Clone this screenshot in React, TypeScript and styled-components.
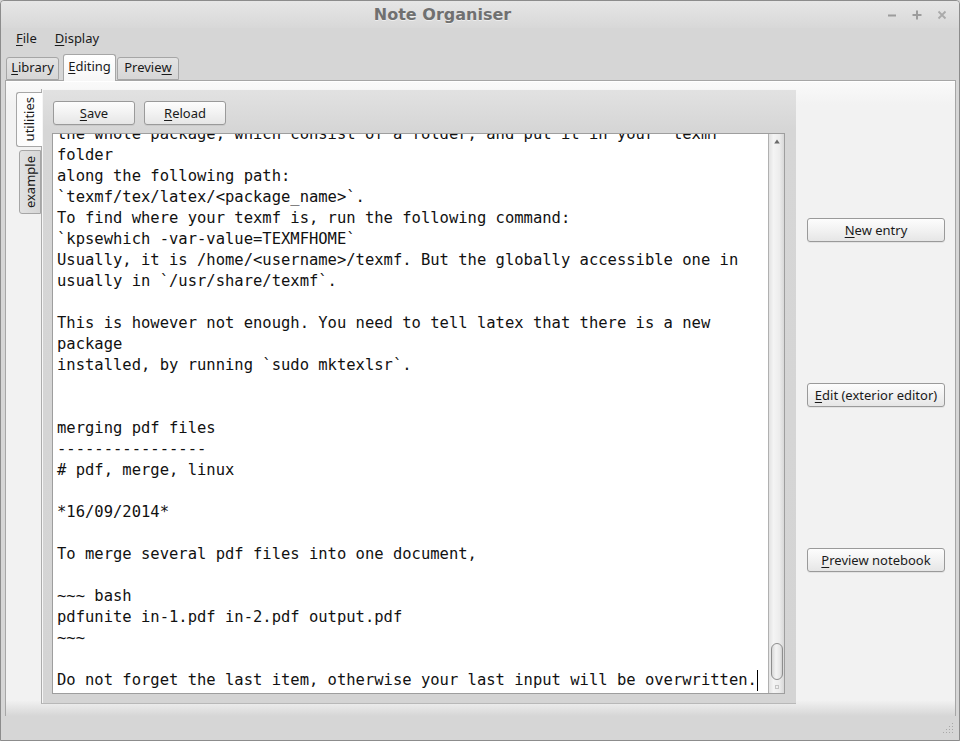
import React from "react";
import styled, { createGlobalStyle } from "styled-components";

const Global = createGlobalStyle`
  html, body { margin: 0; padding: 0; background: #d6d6d6; }
  body { font-family: "Noto Sans", "DejaVu Sans", sans-serif; font-size: 13px; color: #1e1e1e; }
  #root { width: 960px; height: 741px; }
`;

const Window = styled.div`
  box-sizing: border-box;
  width: 960px;
  height: 741px;
  border: 1px solid #8c8c8c;
  border-radius: 4px 4px 0 0;
  background: #d6d6d6;
  display: flex;
  flex-direction: column;
  overflow: hidden;
`;

const TitleBar = styled.div`
  height: 27px;
  flex: none;
  display: flex;
  align-items: center;
  background: linear-gradient(to bottom, #e6e6e6, #d8d8d8);
`;

const Title = styled.div`
  flex: 1;
  text-align: center;
  font-family: "DejaVu Sans", sans-serif;
  font-weight: bold;
  font-size: 16px;
  color: #707070;
  text-shadow: 0 1px 0 rgba(255, 255, 255, 0.5);
`;

const Controls = styled.div`
  width: 75px;
  box-sizing: border-box;
  padding: 0 12px 0 3px;
  display: flex;
  gap: 15px;
  align-items: center;
`;

const MenuBar = styled.div`
  height: 20px;
  flex: none;
  display: flex;
  align-items: center;
  padding-left: 6px;
`;

const MenuItem = styled.div`
  padding: 0 9px;
  line-height: 20px;
  color: #1a1a1a;
`;

const Mn = styled.span`
  text-decoration: underline;
  text-underline-offset: 2px;
  text-decoration-thickness: 1px;
`;

function Label({ text, at }: { text: string; at: number }) {
  return (
    <>
      {text.slice(0, at)}
      <Mn>{text[at]}</Mn>
      {text.slice(at + 1)}
    </>
  );
}

const TabBar = styled.div`
  height: 32px;
  flex: none;
  display: flex;
  align-items: flex-end;
  padding-left: 5px;
  position: relative;
  z-index: 1;
`;

const Tab = styled.div<{ $active?: boolean; $w: number; $ml: number }>`
  box-sizing: border-box;
  width: ${(p) => p.$w}px;
  margin-left: ${(p) => p.$ml}px;
  height: ${(p) => (p.$active ? 27 : 23)}px;
  margin-bottom: ${(p) => (p.$active ? -1 : 0)}px;
  display: flex;
  align-items: center;
  justify-content: center;
  padding-bottom: ${(p) => (p.$active ? 4 : 3)}px;
  border: 1px solid #a6a6a6;
  border-bottom: ${(p) => (p.$active ? "none" : "1px solid #a6a6a6")};
  border-radius: 3px 3px 0 0;
  background: ${(p) =>
    p.$active
      ? "linear-gradient(to bottom, #ffffff, #f6f6f6)"
      : "linear-gradient(to bottom, #e4e4e4, #d6d6d6)"};
  color: #1a1a1a;
`;

const Pane = styled.div`
  height: 636px;
  flex: none;
  margin: 0 3px 0 4px;
  box-sizing: border-box;
  border: 1px solid #a6a6a6;
  border-bottom: none;
  box-shadow: inset 0 1px 0 #ffffff;
  background: linear-gradient(
    to bottom,
    #fafafa 0px,
    #f2f2f2 24px,
    #f2f2f2 calc(100% - 16px),
    #d6d6d6 100%
  );
  display: flex;
  padding: 8px 0 12px 10px;
`;

const VTabWidget = styled.div`
  flex: 1;
  display: flex;
  min-width: 0;
`;

const VTabStrip = styled.div`
  width: 25px;
  flex: none;
  display: flex;
  flex-direction: column;
  align-items: flex-end;
  padding-top: 3px;
  gap: 3px;
  position: relative;
  z-index: 1;
`;

const VTab = styled.div<{ $active?: boolean }>`
  box-sizing: border-box;
  width: ${(p) => (p.$active ? 26 : 22)}px;
  height: ${(p) => (p.$active ? 55 : 64)}px;
  margin-right: ${(p) => (p.$active ? -1 : 0)}px;
  border: 1px solid #a6a6a6;
  border-right: ${(p) => (p.$active ? "none" : "1px solid #a6a6a6")};
  border-radius: 3px 0 0 3px;
  background: ${(p) =>
    p.$active
      ? "linear-gradient(to right, #fbfbfb, #ffffff)"
      : "linear-gradient(to right, #e2e2e2, #d6d6d6)"};
  display: flex;
  align-items: center;
  justify-content: center;
  color: #1a1a1a;
`;

const VText = styled.span`
  writing-mode: vertical-rl;
  transform: rotate(180deg);
  line-height: 16px;
  margin-right: 1px;
`;

const InnerPane = styled.div`
  flex: 1;
  min-width: 0;
  box-sizing: border-box;
  border-left: 1px solid #acacac;
  border-bottom: 1px solid #b8b8b8;
  box-shadow: inset 1px 1px 0 #f6f6f6;
  background: linear-gradient(to bottom, #e2e2e2 0px, #d6d6d6 40px, #d4d4d4 100%);
  display: flex;
  flex-direction: column;
  padding: 12px 11px 9px 10px;
  gap: 8px;
`;

const ButtonRow = styled.div`
  display: flex;
  gap: 9px;
  padding-left: 1px;
  flex: none;
`;

const Button = styled.button<{ $w: number }>`
  box-sizing: border-box;
  width: ${(p) => p.$w}px;
  height: 24px;
  padding: 0;
  border: 1px solid #9a9a9a;
  border-radius: 3px;
  background: linear-gradient(to bottom, #fdfdfd, #f2f2f2 50%, #e6e6e6);
  box-shadow: 0 1px 0 rgba(0, 0, 0, 0.06);
  font-family: "Noto Sans", "DejaVu Sans", sans-serif;
  font-size: 13px;
  color: #1a1a1a;
  line-height: 22px;
`;

const TextEdit = styled.div`
  flex: 1;
  min-height: 0;
  box-sizing: border-box;
  border: 1px solid #9e9e9e;
  background: #ffffff;
  display: flex;
`;

const TextArea = styled.div`
  flex: 1;
  min-width: 0;
  overflow: hidden;
  display: flex;
  flex-direction: column;
  justify-content: flex-end;
  padding: 0 4px 2px 4px;
  font-family: "DejaVu Sans Mono", "Liberation Mono", monospace;
  font-size: 15.5px;
  color: #111111;
`;

const Line = styled.div`
  flex: none;
  height: 21px;
  line-height: 21px;
  white-space: pre;
`;

const Caret = styled.span`
  display: inline-block;
  width: 0;
  height: 21px;
  border-left: 1px solid #000;
  vertical-align: top;
`;

const ScrollBar = styled.div`
  width: 16px;
  flex: none;
  box-sizing: border-box;
  border-left: 1px solid #b0b0b0;
  background: linear-gradient(to right, #e2e2e2, #f4f4f4 30%, #ececec 70%, #d8d8d8);
  display: flex;
  flex-direction: column;
  align-items: center;
  justify-content: space-between;
  padding: 5px 0 4px;
`;

const ScrollBottom = styled.div`
  display: flex;
  flex-direction: column;
  align-items: center;
  gap: 5px;
`;

const Handle = styled.div`
  box-sizing: border-box;
  width: 12px;
  height: 37px;
  border: 1px solid #8e8e8e;
  border-radius: 6px;
  background: linear-gradient(to right, #d8d8d8, #f4f4f4 40%, #e6e6e6 80%, #cfcfcf);
`;

const TinySquare = styled.div`
  box-sizing: border-box;
  width: 4px;
  height: 4px;
  border: 1px solid #c4c4c4;
`;

const RightColumn = styled.div`
  width: 159px;
  flex: none;
  box-sizing: border-box;
  padding: 129px 0 0 11px;
  display: flex;
  flex-direction: column;
  gap: 141px;
`;

const StatusBar = styled.div`
  flex: 1;
  display: flex;
  justify-content: flex-end;
  align-items: flex-end;
  padding: 0 5px 6px 0;
`;

const lines = [
  "To install a package that is not in your distribution, you need to copy",
  "the whole package, which consist of a folder, and put it in your `texmf",
  "folder",
  "along the following path:",
  "`texmf/tex/latex/<package_name>`.",
  "To find where your texmf is, run the following command:",
  "`kpsewhich -var-value=TEXMFHOME`",
  "Usually, it is /home/<username>/texmf. But the globally accessible one in",
  "usually in `/usr/share/texmf`.",
  "",
  "This is however not enough. You need to tell latex that there is a new",
  "package",
  "installed, by running `sudo mktexlsr`.",
  "",
  "",
  "merging pdf files",
  "----------------",
  "# pdf, merge, linux",
  "",
  "*16/09/2014*",
  "",
  "To merge several pdf files into one document,",
  "",
  "~~~ bash",
  "pdfunite in-1.pdf in-2.pdf output.pdf",
  "~~~",
  "",
  "Do not forget the last item, otherwise your last input will be overwritten.",
];

const iconColor = "#9c9c9c";

export default function App() {
  return (
    <>
      <Global />
      <Window>
        <TitleBar>
          <Title>Note Organiser</Title>
          <Controls>
            <svg width="10" height="10" viewBox="0 0 10 10">
              <path d="M1 5.5h8" stroke={iconColor} strokeWidth="2" />
            </svg>
            <svg width="10" height="10" viewBox="0 0 10 10">
              <path d="M0.5 5h9M5 0.5v9" stroke={iconColor} strokeWidth="2" />
            </svg>
            <svg width="10" height="10" viewBox="0 0 10 10">
              <path d="M1.5 1.5l7 7M8.5 1.5l-7 7" stroke="#aaaaaa" strokeWidth="1.8" />
            </svg>
          </Controls>
        </TitleBar>
        <MenuBar>
          <MenuItem>
            <Label text="File" at={0} />
          </MenuItem>
          <MenuItem>
            <Label text="Display" at={0} />
          </MenuItem>
        </MenuBar>
        <TabBar>
          <Tab $w={53} $ml={0}>
            <Label text="Library" at={0} />
          </Tab>
          <Tab $w={53} $ml={4} $active>
            <Label text="Editing" at={0} />
          </Tab>
          <Tab $w={62} $ml={1}>
            <Label text="Preview" at={6} />
          </Tab>
        </TabBar>
        <Pane>
          <VTabWidget>
            <VTabStrip>
              <VTab $active>
                <VText>utilities</VText>
              </VTab>
              <VTab>
                <VText>example</VText>
              </VTab>
            </VTabStrip>
            <InnerPane>
              <ButtonRow>
                <Button $w={82}>
                  <Label text="Save" at={0} />
                </Button>
                <Button $w={82}>
                  <Label text="Reload" at={0} />
                </Button>
              </ButtonRow>
              <TextEdit>
                <TextArea>
                  {lines.map((l, i) => (
                    <Line key={i}>
                      {l}
                      {i === lines.length - 1 && <Caret />}
                    </Line>
                  ))}
                </TextArea>
                <ScrollBar>
                  <svg width="6" height="5" viewBox="0 0 6 5">
                    <path d="M3 0.5L5.8 4.5H0.2Z" fill="#6a6a6a" />
                  </svg>
                  <ScrollBottom>
                    <Handle />
                    <TinySquare />
                  </ScrollBottom>
                </ScrollBar>
              </TextEdit>
            </InnerPane>
          </VTabWidget>
          <RightColumn>
            <Button $w={138}>
              <Label text="New entry" at={0} />
            </Button>
            <Button $w={138}>
              <Label text="Edit (exterior editor)" at={0} />
            </Button>
            <Button $w={138}>
              <Label text="Preview notebook" at={0} />
            </Button>
          </RightColumn>
        </Pane>
        <StatusBar>
          <svg width="11" height="11" viewBox="0 0 11 11">
            {[0, 1, 2, 3].flatMap((r) =>
              [0, 1, 2, 3]
                .filter((c) => r + c >= 3)
                .map((c) => (
                  <rect key={`${r}-${c}`} x={c * 3} y={r * 3} width="1" height="1" fill="#a8a8a8" />
                ))
            )}
          </svg>
        </StatusBar>
      </Window>
    </>
  );
}
